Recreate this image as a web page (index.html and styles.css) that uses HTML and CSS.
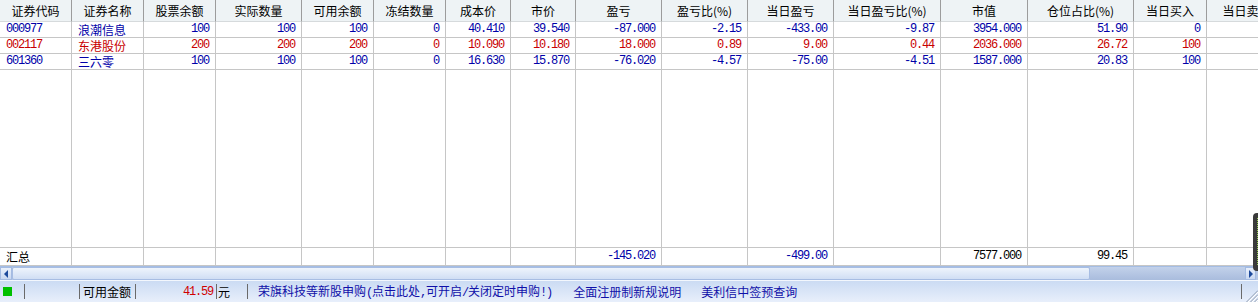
FILE: index.html
```html
<!DOCTYPE html>
<html lang="zh-CN">
<head>
<meta charset="utf-8">
<title>持仓</title>
<link rel="stylesheet" href="styles.css">
</head>
<body>
<div class="app">
  <div class="grid">
    <div class="row head">
      <div>证券代码</div><div>证券名称</div><div>股票余额</div><div>实际数量</div><div>可用余额</div><div>冻结数量</div><div>成本价</div><div>市价</div><div>盈亏</div><div>盈亏比(%)</div><div>当日盈亏</div><div>当日盈亏比(%)</div><div>市值</div><div>仓位占比(%)</div><div>当日买入</div><div class="cut">当日卖出</div>
    </div>
    <div class="row data blue">
      <div class="left">000977</div><div class="left cjk">浪潮信息</div><div>100</div><div>100</div><div>100</div><div>0</div><div>40.410</div><div>39.540</div><div>-87.000</div><div>-2.15</div><div>-433.00</div><div>-9.87</div><div>3954.000</div><div>51.90</div><div>0</div><div></div>
    </div>
    <div class="row data red">
      <div class="left">002117</div><div class="left cjk">东港股份</div><div>200</div><div>200</div><div>200</div><div>0</div><div>10.090</div><div>10.180</div><div>18.000</div><div>0.89</div><div>9.00</div><div>0.44</div><div>2036.000</div><div>26.72</div><div>100</div><div></div>
    </div>
    <div class="row data blue">
      <div class="left">601360</div><div class="left cjk">三六零</div><div>100</div><div>100</div><div>100</div><div>0</div><div>16.630</div><div>15.870</div><div>-76.020</div><div>-4.57</div><div>-75.00</div><div>-4.51</div><div>1587.000</div><div>20.83</div><div>100</div><div></div>
    </div>
    <div class="row filler">
      <div></div><div></div><div></div><div></div><div></div><div></div><div></div><div></div><div></div><div></div><div></div><div></div><div></div><div></div><div></div><div></div>
    </div>
    <div class="row sum">
      <div class="left cjk">汇总</div><div></div><div></div><div></div><div></div><div></div><div></div><div></div><div class="blue">-145.020</div><div></div><div class="blue">-499.00</div><div></div><div>7577.000</div><div>99.45</div><div></div><div></div>
    </div>
  </div>

  <div class="hscroll">
    <div class="sbtn">
      <svg width="6" height="8" viewBox="0 0 6 8"><polygon points="5,0 5,8 1,4" fill="#1d4a9c"/></svg>
    </div>
    <div class="thumb"></div>
    <div class="track"></div>
    <div class="sbtn right">
      <svg width="6" height="8" viewBox="0 0 6 8"><polygon points="1,0 1,8 5,4" fill="#1d4a9c"/></svg>
    </div>
  </div>

  <div class="status">
    <span class="sq"></span>
    <span class="gap1"></span>
    <span class="sep"></span>
    <span class="blank"></span>
    <span class="sep"></span>
    <span class="label">可用金额</span>
    <span class="sep"></span>
    <span class="money">41.59</span>
    <span class="sep"></span>
    <span class="unit">元</span>
    <span class="sep"></span>
    <span class="link first">荣旗科技等新股申购<span class="m">(</span>点击此处<span class="m">,</span>可开启<span class="m">/</span>关闭定时申购<span class="m">!)</span></span>
    <span class="link second">全面注册制新规说明</span>
    <span class="link third">美利信中签预查询</span>
    <span class="spacer"></span>
    <span class="sep"></span>
    <span class="grip">
      <svg width="13" height="14" viewBox="0 0 13 14">
        <g stroke="#8d9bb0" stroke-width="1">
          <line x1="13" y1="2.5" x2="1.5" y2="14"/>
          <line x1="13" y1="6.5" x2="5.5" y2="14"/>
          <line x1="13" y1="10.5" x2="9.5" y2="14"/>
        </g>
        <g stroke="#ffffff" stroke-width="1">
          <line x1="13" y1="4" x2="3" y2="14"/>
          <line x1="13" y1="8" x2="7" y2="14"/>
          <line x1="13" y1="12" x2="11" y2="14"/>
        </g>
      </svg>
    </span>
  </div>

  <div class="float"></div>
</div>
</body>
</html>
```
FILE: styles.css
```css
html, body {
  margin: 0;
  padding: 0;
}
body {
  width: 1258px;
  height: 302px;
  overflow: hidden;
  background: #ffffff;
  font-family: "Noto Sans CJK SC", "Liberation Sans", sans-serif;
  font-size: 12px;
  color: #000000;
}
.app {
  position: relative;
  width: 1258px;
  height: 302px;
  overflow: hidden;
  display: flex;
  flex-direction: column;
}

/* ---------- grid ---------- */
.grid {
  width: 1258px;
  overflow: hidden;
  flex: none;
}
.row {
  display: grid;
  grid-template-columns: 72px 72px 72px 86px 72px 72px 65px 65px 86px 86px 86px 107px 87px 106px 73px 80px;
  width: 1286px;
}
.row > div {
  border-right: 1px solid #c6c6c6;
  border-bottom: 1px solid #c6c6c6;
  padding: 0 6px 0 6px;
  white-space: nowrap;
  overflow: hidden;
  text-align: right;
  font-family: "Liberation Mono", monospace;
  letter-spacing: -1.2px;
  line-height: 15px;
}
.row > div.left {
  text-align: left;
}
.row > div.cjk {
  font-family: "Noto Sans CJK SC", sans-serif;
  letter-spacing: 0;
}
.head {
  height: 22px;
  background: #eef3f5;
}
.head > div {
  text-align: center;
  font-family: "Noto Sans CJK SC", sans-serif;
  letter-spacing: 0;
  line-height: 21px;
  border-right-color: #9c9c9c;
  border-bottom-color: #d6dadc;
  padding: 0 2px;
}
.data {
  height: 16px;
}
.filler {
  height: 178px;
}
.sum {
  height: 18px;
}
.sum > div {
  line-height: 17px;
}
.blue, .blue > div {
  color: #0000a8;
}
.red, .red > div {
  color: #c80000;
}

/* ---------- horizontal scrollbar ---------- */
.hscroll {
  flex: none;
  height: 14px;
  box-sizing: border-box;
  display: flex;
  border-top: 1px solid #a4bde4;
  background: #b5c7e5;
}
.sbtn {
  width: 12px;
  height: 13px;
  box-sizing: border-box;
  display: flex;
  align-items: center;
  justify-content: center;
  background: linear-gradient(#e9f0fb, #c9d8f1);
  border: 1px solid #a4bbe2;
}
.sbtn.right {
  width: 11px;
  margin-right: 2px;
}
.thumb {
  width: 1078px;
  height: 13px;
  box-sizing: border-box;
  background: linear-gradient(#eef4fc, #d0def4);
  border: 1px solid #a7bde3;
  border-radius: 2px;
}
.track {
  flex: 1;
  background: linear-gradient(#c2d1ea, #a9bcdd);
}

/* ---------- status bar ---------- */
.status {
  flex: none;
  height: 22px;
  box-sizing: border-box;
  border-top: 1px solid #f3f7fd;
  background: linear-gradient(#cbdbf3, #e8effb);
  display: flex;
  align-items: center;
  white-space: nowrap;
  line-height: 14px;
}
.sq {
  width: 9px;
  height: 9px;
  margin-left: 3px;
  background: #00c000;
}
.gap1 {
  width: 12px;
}
.sep {
  width: 1px;
  height: 15px;
  background: #6a6a6a;
  flex: none;
}
.blank {
  width: 54px;
}
.label {
  width: 55px;
  box-sizing: border-box;
  padding-left: 3px;
}
.money {
  width: 80px;
  box-sizing: border-box;
  padding-right: 3px;
  text-align: right;
  color: #d00000;
  font-family: "Liberation Mono", monospace;
  letter-spacing: -1.2px;
}
.unit {
  width: 30px;
  box-sizing: border-box;
  padding-left: 1px;
}
.link {
  color: #1010a8;
}
.link.first {
  margin-left: 10px;
}
.link.second {
  margin-left: 21px;
}
.link.third {
  margin-left: 20px;
}
.m {
  font-family: "Liberation Mono", monospace;
  letter-spacing: -1.2px;
}
.spacer {
  flex: 1;
}
.grip {
  width: 13px;
  height: 14px;
  margin-left: 3px;
  align-self: flex-end;
  display: flex;
}

/* ---------- floating widget at the right edge ---------- */
.float {
  position: absolute;
  left: 1253px;
  top: 213px;
  width: 8px;
  height: 58px;
  background: #3a3a3a;
  border-radius: 4px 0 0 4px;
}
.float::after {
  content: "";
  position: absolute;
  left: 4px;
  top: 5px;
  bottom: 5px;
  width: 1px;
  background: repeating-linear-gradient(#9fd25a 0 1px, #3a3a3a 1px 2px);
}
```
